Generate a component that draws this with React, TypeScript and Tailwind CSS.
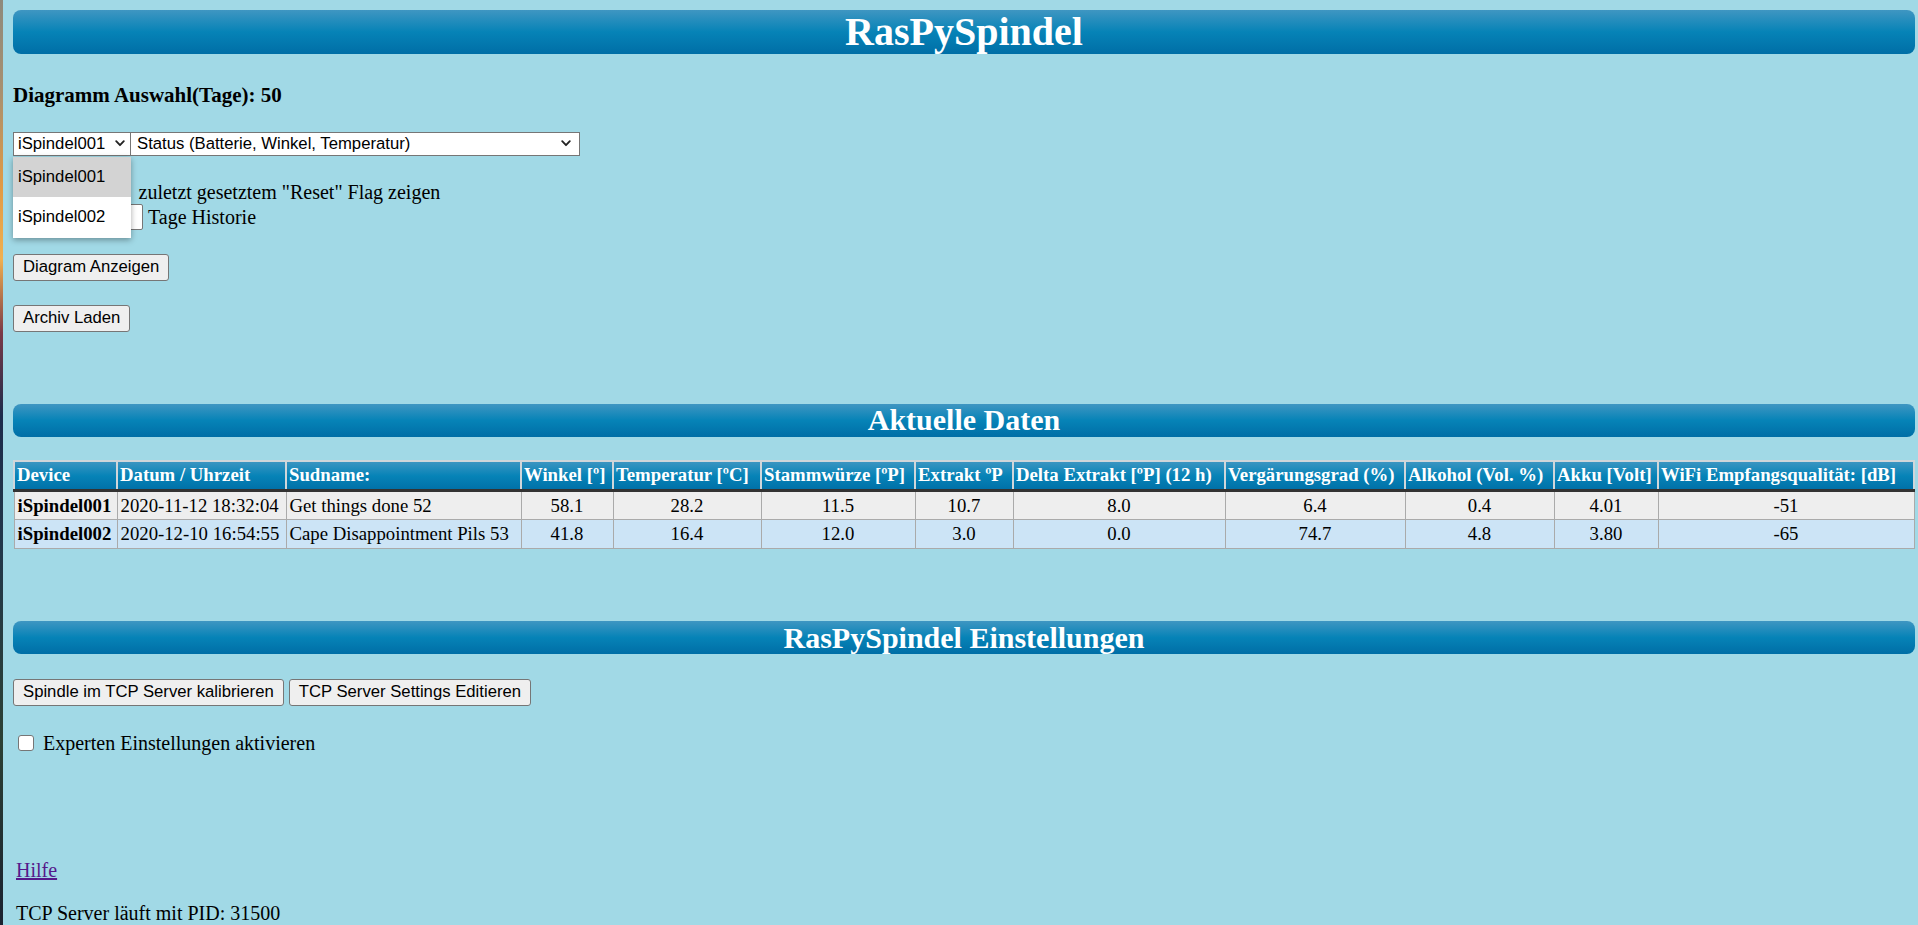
import React from 'react'

const columns = [
  { label: 'Device', w: 'w-[103px]' },
  { label: 'Datum / Uhrzeit', w: 'w-[169px]' },
  { label: 'Sudname:', w: 'w-[235px]' },
  { label: 'Winkel [º]', w: 'w-[92px]' },
  { label: 'Temperatur [ºC]', w: 'w-[148px]' },
  { label: 'Stammwürze [ºP]', w: 'w-[154px]' },
  { label: 'Extrakt ºP', w: 'w-[98px]' },
  { label: 'Delta Extrakt [ºP] (12 h)', w: 'w-[212px]' },
  { label: 'Vergärungsgrad (%)', w: 'w-[180px]' },
  { label: 'Alkohol (Vol. %)', w: 'w-[149px]' },
  { label: 'Akku [Volt]', w: 'w-[104px]' },
  { label: 'WiFi Empfangsqualität: [dB]', w: 'w-[256px]' },
]

const rows = [
  {
    bg: 'bg-[#eeeeee]',
    cells: ['iSpindel001', '2020-11-12 18:32:04', 'Get things done 52', '58.1', '28.2', '11.5', '10.7', '8.0', '6.4', '0.4', '4.01', '-51'],
  },
  {
    bg: 'bg-[#cce4f6]',
    cells: ['iSpindel002', '2020-12-10 16:54:55', 'Cape Disappointment Pils 53', '41.8', '16.4', '12.0', '3.0', '0.0', '74.7', '4.8', '3.80', '-65'],
  },
]

function Chevron() {
  return (
    <svg width="10" height="7" viewBox="0 0 10 7" fill="none" stroke="#222" strokeWidth="1.8" strokeLinecap="round" strokeLinejoin="round">
      <polyline points="1.2,1.2 5,5.2 8.8,1.2" />
    </svg>
  )
}

function Bar({ title, big }: { title: string; big?: boolean }) {
  return (
    <div
      className={
        big
          ? 'h-[45px] rounded-[8px] flex items-center justify-center bg-[linear-gradient(to_bottom,#3f96c2,#0683b7_50%,#006ea6)]'
          : 'h-[33px] rounded-[8px] flex items-center justify-center bg-[linear-gradient(to_bottom,#3f96c2,#0683b7_50%,#006ea6)]'
      }
    >
      <h1 className={big ? 'text-white font-bold text-[40px] leading-none' : 'text-white font-bold text-[30px] leading-none'}>{title}</h1>
    </div>
  )
}

function Btn({ children }: { children: React.ReactNode }) {
  return (
    <button className="h-[27px] px-[9px] bg-[#efefef] border border-[#767676] rounded-[3px] text-[16.7px] leading-none text-black font-['Liberation_Sans',Arial,sans-serif]">
      {children}
    </button>
  )
}

export default function App() {
  return (
    <div className="flex h-[925px] overflow-hidden bg-[#a1d9e6] text-black font-['Liberation_Serif','Times_New_Roman',serif]">
      {/* desktop peeking in at the window edge */}
      <div className="w-[3px] shrink-0 bg-[linear-gradient(to_bottom,#8d8a7c_0%,#a89070_10%,#e09a45_20%,#f0b050_28%,#7a3a48_36%,#1c2c4c_45%,#22384a_60%,#2c4034_80%,#1a2230_100%)]" />

      <div className="flex-1 pl-[10px] pr-[5px] pt-[10px] flex flex-col">
        <Bar title="RasPySpindel" big />

        <h3 className="mt-[29px] text-[21px] leading-[24px] font-bold">Diagramm Auswahl(Tage): 50</h3>

        {/* selects + open dropdown */}
        <div className="relative mt-[25px] flex h-[24px] font-['Liberation_Sans',Arial,sans-serif] text-[16.7px]">
          <div className="w-[118px] h-full bg-white border border-[#767676] flex items-center justify-between pl-[4px] pr-[5px]">
            <span>iSpindel001</span>
            <Chevron />
          </div>
          <div className="w-[449px] h-full bg-white border border-[#767676] border-l-0 flex items-center justify-between pl-[6px] pr-[8px]">
            <span>Status (Batterie, Winkel, Temperatur)</span>
            <Chevron />
          </div>

          <ul className="absolute left-0 top-[25px] z-10 w-[118px] bg-white shadow-[0_2px_6px_rgba(0,0,0,0.35)]">
            <li className="h-[40px] flex items-center pl-[5px] bg-[#d3d3d3]">iSpindel001</li>
            <li className="h-[41px] flex items-center pl-[5px]">iSpindel002</li>
          </ul>
        </div>

        <label className="mt-[24px] flex items-center h-[24px] text-[20px]">
          <span className="ml-[4px] mr-[14px] w-[16px] h-[16px] bg-white border border-[#767676] rounded-[3px]" />
          <span>Daten seit</span>
          <span className="ml-[11px]">zuletzt gesetztem "Reset" Flag zeigen</span>
        </label>
        <div className="flex items-center h-[26px] text-[20px] gap-[5px]">
          <span className="w-[130px] h-[26px] bg-white border border-[#767676] rounded-[2px]" />
          <span>Tage Historie</span>
        </div>

        <div className="mt-[24px] flex">
          <Btn>Diagram Anzeigen</Btn>
        </div>
        <div className="mt-[24px] flex">
          <Btn>Archiv Laden</Btn>
        </div>

        <div className="mt-[72px]">
          <Bar title="Aktuelle Daten" />
        </div>

        <table className="mt-[23px] w-full table-fixed border-collapse border border-[#aaaaaa] text-[18.75px] leading-[22px]">
          <colgroup>
            {columns.map(c => (
              <col key={c.label} className={c.w} />
            ))}
          </colgroup>
          <thead>
            <tr className="bg-[linear-gradient(to_bottom,#3f96c2,#0683b7_50%,#006ea6)]">
              {columns.map(c => (
                <th
                  key={c.label}
                  className="h-[30px] px-[2px] text-left text-white font-bold whitespace-nowrap border-x-2 border-t-2 border-[#d0d6da] border-b-[3px] border-b-[#333333]"
                >
                  {c.label}
                </th>
              ))}
            </tr>
          </thead>
          <tbody>
            {rows.map(r => (
              <tr key={r.cells[0]} className={r.bg}>
                {r.cells.map((v, i) => (
                  <td
                    key={i}
                    className={
                      i === 0
                        ? 'h-[29px] px-[3px] border border-[#aaaaaa] font-bold whitespace-nowrap'
                        : i < 3
                          ? 'h-[29px] px-[3px] border border-[#aaaaaa] whitespace-nowrap'
                          : 'h-[29px] px-[3px] border border-[#aaaaaa] text-center'
                    }
                  >
                    {v}
                  </td>
                ))}
              </tr>
            ))}
          </tbody>
        </table>

        <div className="mt-[72px]">
          <Bar title="RasPySpindel Einstellungen" />
        </div>

        <div className="mt-[25px] flex gap-[5px]">
          <Btn>Spindle im TCP Server kalibrieren</Btn>
          <Btn>TCP Server Settings Editieren</Btn>
        </div>

        <label className="mt-[25px] flex items-center h-[24px] text-[20px]">
          <span className="ml-[5px] mr-[9px] w-[16px] h-[16px] bg-white border border-[#767676] rounded-[3px]" />
          Experten Einstellungen aktivieren
        </label>

        <div className="mt-[100px] pl-[3px] h-[24px] text-[20px]">
          <a href="#" className="text-[#551a8b] underline">Hilfe</a>
        </div>

        <p className="mt-[22px] pl-[3px] text-[20px] leading-[24px]">TCP Server läuft mit PID: 31500</p>
      </div>
    </div>
  )
}
